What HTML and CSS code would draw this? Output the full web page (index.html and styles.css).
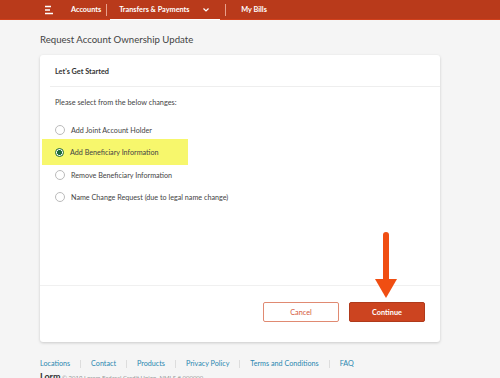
FILE: index.html
```html
<!DOCTYPE html>
<html lang="en">
<head>
    <meta charset="UTF-8">
    <title>Request Account Ownership Update</title>
    <link rel="stylesheet" href="styles.css">
</head>
<body>

<div class="topbar">
    <span class="menu-icon">
        <svg width="10" height="10" viewBox="0 0 10 10"><path d="M1 1.5h6M1 5h5M1 8.5h8" stroke="#fff" stroke-width="1.6"/></svg>
    </span>
    <a class="nav-item">Accounts</a>
    <span class="nav-sep"></span>
    <a class="nav-item active">Transfers &amp; Payments
        <svg class="chev" width="8" height="6" viewBox="0 0 8 6"><path d="M1.5 1.5l2.5 2.5 2.5-2.5" stroke="#fff" stroke-width="1.2" fill="none"/></svg>
    </a>
    <span class="nav-sep"></span>
    <a class="nav-item">My Bills</a>
</div>

<div class="page">
    <h1>Request Account Ownership Update</h1>

    <div class="card">
        <div class="card-head">Let's Get Started</div>
        <div class="card-body">
            <p class="intro">Please select from the below changes:</p>
            <ul class="options">
                <li><span class="radio"></span>Add Joint Account Holder</li>
                <li class="picked"><span class="radio on"></span>Add Beneficiary Information</li>
                <li><span class="radio"></span>Remove Beneficiary Information</li>
                <li><span class="radio"></span>Name Change Request (due to legal name change)</li>
            </ul>
        </div>
        <div class="card-foot">
            <button class="btn btn-cancel">Cancel</button>
            <button class="btn btn-go">Continue</button>
            <svg class="arrow" width="24" height="67" viewBox="0 0 24 67">
                <path d="M12 3v46" stroke="#f04e12" stroke-width="6" stroke-linecap="round"/>
                <path d="M1 47h22l-11 19z" fill="#f04e12"/>
            </svg>
        </div>
    </div>

    <div class="footer-links">
        <a>Locations</a><span class="sep"></span>
        <a>Contact</a><span class="sep"></span>
        <a>Products</a><span class="sep"></span>
        <a>Privacy Policy</a><span class="sep"></span>
        <a>Terms and Conditions</a><span class="sep"></span>
        <a>FAQ</a>
    </div>
    <div class="legal"><span class="logo">Lorm</span> © 2019 Lorem Federal Credit Union. NMLS # 000000</div>
</div>

</body>
</html>
```

FILE: styles.css
```css
body {
    margin: 0;
    background: #f5f5f5;
    font-family: Lato, "Open Sans", sans-serif;
    color: #444;
}
.topbar {
    height: 19px;
    background: #b93a1b;
    border-bottom: 1px solid #d1401c;
    display: flex;
    align-items: center;
    padding-left: 44px;
}
.menu-icon {
    display: flex;
    width: 10px;
    margin-right: 17px;
}
.nav-item {
    color: #fff;
    font-size: 7.3px;
    font-weight: bold;
    white-space: nowrap;
}
.nav-item.active {
    height: 20px;
    box-sizing: border-box;
    width: 110px;
    margin-top: 1px;
    padding: 5px 0 0 9px;
    border-bottom: 1px solid #fff;
    display: flex;
    align-items: flex-start;
}
.chev {
    margin-left: auto;
    margin-right: 10px;
    margin-top: 2px;
}
.nav-sep {
    width: 1px;
    height: 12px;
    background: #e8a08c;
    margin: 0 3px 0 5px;
}
.nav-sep + .nav-item:not(.active) {
    margin-left: 12px;
}
.page {
    padding: 0 40px 0 40px;
    width: 400px;
}
h1 {
    font-size: 9.6px;
    font-weight: normal;
    color: #444;
    margin: 14px 0 10px;
}
.card {
    background: #fff;
    border-radius: 3px;
    box-shadow: 0 1px 3px rgba(0,0,0,0.18);
    height: 287px;
    display: flex;
    flex-direction: column;
}
.card-head {
    font-size: 7.3px;
    font-weight: bold;
    color: #333;
    padding: 12px 15px 10px 5px;
    margin-left: 10px;
    border-bottom: 1px solid #eee;
}
.card-body {
    flex: 1;
    padding: 0 15px;
}
.intro {
    font-size: 7.3px;
    margin: 11px 0 12px;
    color: #444;
}
.options {
    list-style: none;
    margin: 0;
    padding: 0;
}
.options li {
    display: flex;
    align-items: center;
    height: 22px;
    font-size: 7.2px;
    color: #444;
}
.options li.picked {
    background: #f7f76c;
    margin-left: -13px;
    padding-left: 13px;
    width: 133px;
    height: 26px;
    margin-top: -2px;
    margin-bottom: -1px;
}
.radio {
    width: 8px;
    height: 8px;
    border: 1px solid #bbb;
    border-radius: 50%;
    background: #fff;
    margin-right: 6px;
    box-sizing: content-box;
}
.radio.on {
    border-color: #1d6a3a;
    border-width: 1.5px;
    width: 7px;
    height: 7px;
    background: radial-gradient(circle, #1d6a3a 0 2.2px, #fff 2.8px);
}
.card-foot {
    position: relative;
    border-top: 1px solid #f0f0f0;
    height: 57px;
    display: flex;
    justify-content: flex-end;
    align-items: flex-start;
    padding: 16px 15px 0 0;
    box-sizing: border-box;
    gap: 10px;
}
.btn {
    width: 76px;
    height: 20px;
    font-family: Lato, sans-serif;
    font-size: 7.3px;
    border-radius: 2px;
}
.btn-cancel {
    background: #fff;
    color: #d4593b;
    border: 1px solid #e08a72;
}
.btn-go {
    background: #cc4420;
    color: #fff;
    border: 1px solid #b03a1b;
    font-weight: bold;
}
.arrow {
    position: absolute;
    right: 42px;
    top: -54px;
}
.footer-links {
    margin-top: 17px;
    display: flex;
    align-items: center;
    font-size: 7.2px;
}
.footer-links a {
    color: #2a87b0;
}
.footer-links .sep {
    width: 1px;
    height: 8px;
    background: #ddd;
    margin: 0 10px;
}
.legal {
    font-size: 6px;
    color: #999;
    margin-top: 3px;
    white-space: nowrap;
}
.logo {
    font-size: 9px;
    font-weight: bold;
    color: #333;
}
```
